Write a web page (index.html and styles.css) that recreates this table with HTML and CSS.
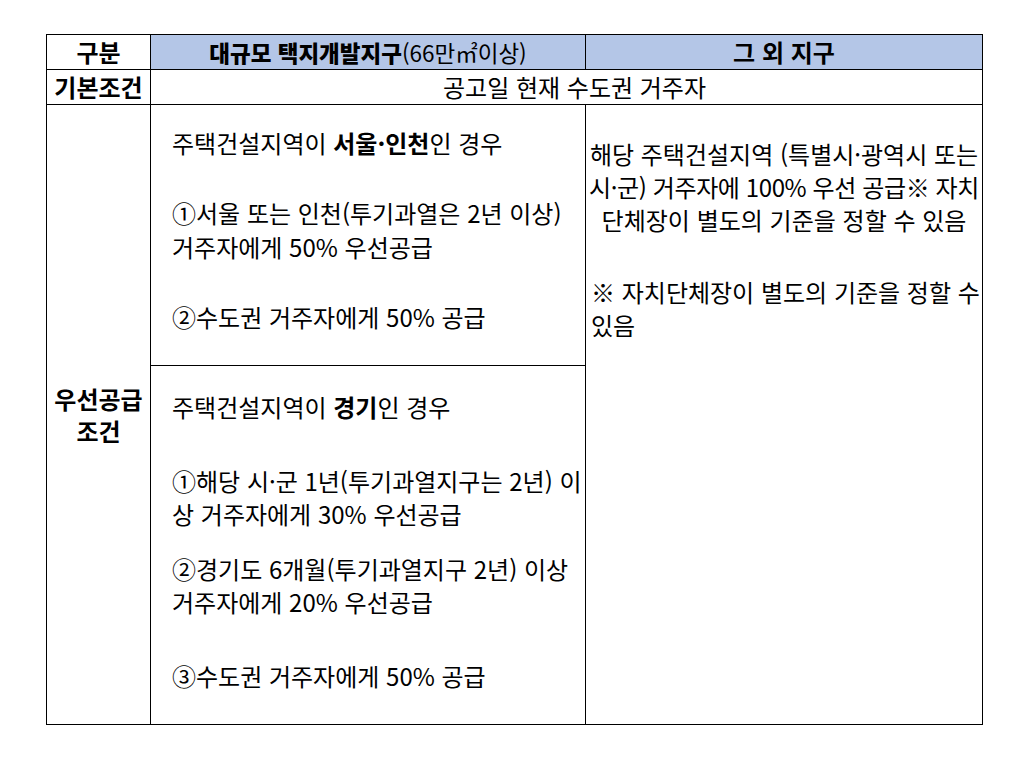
FILE: index.html
```html
<!DOCTYPE html>
<html lang="ko">
<head>
<meta charset="utf-8">
<link rel="stylesheet" href="styles.css">
</head>
<body>
<div class="page">
<table class="grid">
  <colgroup><col class="c1"><col class="c2"><col class="c3"></colgroup>
  <tr class="head">
    <th class="label">구분</th>
    <th class="blue main"><b>대규모 택지개발지구</b><span class="reg">(66만㎡이상)</span></th>
    <th class="blue">그 외 지구</th>
  </tr>
  <tr class="basic">
    <th class="label">기본조건</th>
    <td colspan="2" class="center">공고일 현재 수도권 거주자</td>
  </tr>
  <tr class="r1">
    <th rowspan="2" class="label tall">우선공급<br>조건</th>
    <td class="case top">
      <p>주택건설지역이 <b>서울·인천</b>인 경우</p>
      <p class="gap">①서울 또는 인천(투기과열은 2년 이상)<br>거주자에게 50% 우선공급</p>
      <p class="gap">②수도권 거주자에게 50% 공급</p>
    </td>
    <td rowspan="2" class="other">
      <p class="centered">해당 주택건설지역 (특별시·광역시 또는<br><span class="tight">시·군) 거주자에 100% 우선 공급※ 자치</span><br>단체장이 별도의 기준을 정할 수 있음</p>
      <p class="left">※ 자치단체장이 별도의 기준을 정할 수<br>있음</p>
    </td>
  </tr>
  <tr class="r2">
    <td class="case bottom">
      <p>주택건설지역이 <b>경기</b>인 경우</p>
      <p class="g1">①해당 시·군 1년(투기과열지구는 2년) 이<br>상 거주자에게 30% 우선공급</p>
      <p class="g2">②경기도 6개월(투기과열지구 2년) 이상<br>거주자에게 20% 우선공급</p>
      <p class="g3">③수도권 거주자에게 50% 공급</p>
    </td>
  </tr>
</table>
</div>
</body>
</html>
```

FILE: styles.css
```css
html, body {
  margin: 0;
  padding: 0;
  background: #ffffff;
}
body {
  font-family: "Noto Sans CJK KR", "Noto Sans", sans-serif;
  font-size: 24px;
  color: #000000;
}
.page {
  padding: 34px 0 0 46px;
}
.grid {
  border-collapse: collapse;
  table-layout: fixed;
  width: 936px;
}
.c1 { width: 104px; }
.c2 { width: 435px; }
.c3 { width: 397px; }
.grid th,
.grid td {
  border: 1px solid #000000;
  padding: 0;
  line-height: 34px;
  white-space: nowrap;
}
.grid th { font-weight: 700; }
.grid .head th { height: 33px; text-align: center; }
.grid .head .main { font-size: 22.5px; }
.grid .blue { background: #b4c6e7; }
.grid .reg { font-weight: 400; }
.grid .basic th,
.grid .basic td { height: 33px; text-align: center; }
.grid .basic .center { text-align: center; font-weight: 400; padding-left: 16px; }
.grid .label { text-align: center; }
.grid .tall { line-height: 32px; vertical-align: middle; }
.grid p { margin: 0; }
.grid .case { vertical-align: top; padding-left: 21px; }
.grid .case.top { height: 239px; padding-top: 21px; line-height: 34px; }
.grid .case.bottom { height: 334px; padding-top: 24px; line-height: 33px; }
.grid .case.top .gap { margin-top: 36px; }
.grid .case.bottom .g1 { margin-top: 41px; }
.grid .case.bottom .g2 { margin-top: 22px; }
.grid .case.bottom .g3 { margin-top: 41px; }
.grid .other { vertical-align: top; padding: 32px 0 0 0; line-height: 33px; }
.grid .other .centered { text-align: center; }
.grid .other .tight { letter-spacing: -0.4px; }
.grid .other .left { margin-top: 39px; padding-left: 5px; }
```
